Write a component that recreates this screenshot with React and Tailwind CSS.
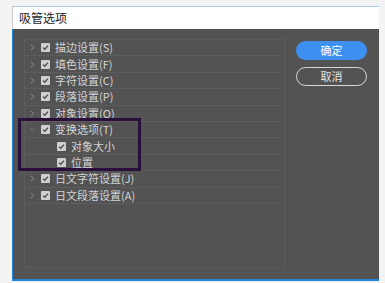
import React from "react"

const rows = [
    { label: "描边设置(S)" },
    { label: "填色设置(F)" },
    { label: "字符设置(C)" },
    { label: "段落设置(P)" },
    { label: "对象设置(O)" },
    { label: "变换选项(T)", open: true },
    { label: "对象大小", child: true },
    { label: "位置", child: true },
    { label: "日文字符设置(J)" },
    { label: "日文段落设置(A)" },
]

function Check()
{
    return (
        <span className="w-[9px] h-[9px] bg-[#cfcfcf] rounded-[1px] flex items-center justify-center shrink-0">
            <svg width="7" height="7" viewBox="0 0 7 7">
                <path d="M1 3.6 L2.8 5.3 L6 1.6" fill="none" stroke="#4a4a4a" strokeWidth="1.3" />
            </svg>
        </span>
    )
}

function Chevron({ open })
{
    return (
        <span className="w-[5px] h-[8px] flex items-center justify-center shrink-0">
            {open ? (
                <svg width="7" height="5" viewBox="0 0 7 5">
                    <path d="M0.8 1 L3.5 3.7 L6.2 1" fill="none" stroke="#8f8f8f" strokeWidth="1" />
                </svg>
            ) : (
                <svg width="5" height="7" viewBox="0 0 5 7">
                    <path d="M1 0.8 L3.7 3.5 L1 6.2" fill="none" stroke="#8f8f8f" strokeWidth="1" />
                </svg>
            )}
        </span>
    )
}

function App()
{
    return (
        <div className="relative min-h-screen bg-[#f3f3f3] pt-[6px] pl-[12px]" style={{ fontFamily: '"Noto Sans CJK SC", "Noto Sans", sans-serif' }}>
            <div className="w-[367px]">
                <div className="h-[23px] bg-white border-t border-t-[#a9c9e6] border-l border-l-[#cfcfcf] flex items-center pl-[6px] text-[12px] text-[#222]">
                    吸管选项
                </div>
                <div className="h-[252px] bg-[#535353] border-l border-b-2 border-[#1f86e0] flex pt-[10px] pl-[11px]">
                    <div className="w-[261px] h-[229px] border border-[#5c5c5c] pr-[4px]">
                        {rows.map((row, index) =>
                        {
                            return (
                                <div key={index} className="h-[16.4px] border-b border-[#5d5d5d] flex items-center text-[11px] text-[#d4d4d4] leading-none">
                                    {row.child ? (
                                        <div className="flex items-center pl-[32px] gap-[5px]">
                                            <Check />
                                            <span>{row.label}</span>
                                        </div>
                                    ) : (
                                        <div className="flex items-center pl-[5px]">
                                            <Chevron open={row.open} />
                                            <span className="ml-[6px]"><Check /></span>
                                            <span className="ml-[5px]">{row.label}</span>
                                        </div>
                                    )}
                                </div>
                            )
                        })}
                    </div>
                    <div className="ml-[11px] mt-[2px] flex flex-col gap-[7px]">
                        <button className="w-[71px] h-[19px] rounded-full bg-[#3d8ff0] text-white text-[11px] leading-none">确定</button>
                        <button className="w-[71px] h-[19px] rounded-full border border-[#d8d8d8] text-[#e6e6e6] text-[11px] leading-none">取消</button>
                    </div>
                </div>
            </div>
            <div className="absolute left-[18px] top-[118px] w-[123px] h-[53px] border-[3px] border-[#2a0f3c]"></div>
        </div>
    )
}

export default App
